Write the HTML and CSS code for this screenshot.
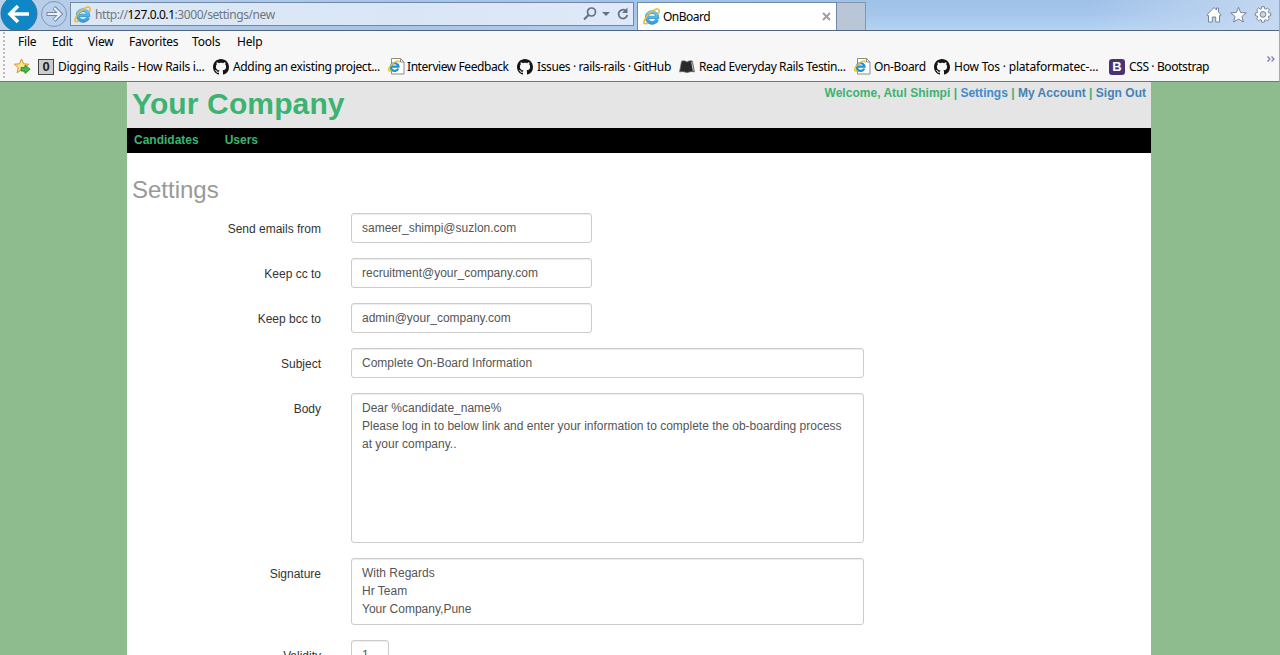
FILE: index.html
```html
<!DOCTYPE html>
<html lang="en">
<head>
<meta charset="utf-8">
<title>OnBoard</title>
<link rel="stylesheet" href="styles.css">
</head>
<body>
<svg class="defs" width="0" height="0">
  <defs>
    <linearGradient id="ieblue" x1="0" y1="0" x2="0" y2="1"><stop offset="0" stop-color="#6fcdf5"/><stop offset="1" stop-color="#3a9fe0"/></linearGradient>
    <symbol id="ie" viewBox="0 0 16 16">
      <path d="M13.300 10.700A5.100 5.100 0 1 1 13.600 8.800H4.600" fill="none" stroke="#3c8fca" stroke-width="3.200"/>
      <path d="M13.100 10.700A5.100 5.100 0 1 1 13.600 8.800H4.600" fill="none" stroke="url(#ieblue)" stroke-width="2.300"/>
      <path d="M14.600 5.400C15.700 2.700 15.300.9 13.400 1 9.500 1.200 2 8.100.9 12.800.4 15.300 2.300 15.300 4.600 14" fill="none" stroke="#f0b92a" stroke-width="1.500"/>
    </symbol>
    <symbol id="iepage" viewBox="0 0 17 17">
      <path d="M3.500.500h9l3.500 3.500v12H3.500z" fill="#fff" stroke="#8b8b8b"/>
      <path d="M12.500.500v3.500H16" fill="none" stroke="#8b8b8b"/>
      <path d="M10.200 10.600A3.900 3.900 0 1 1 10.500 8.700H3.500" fill="none" stroke="#1e8fdc" stroke-width="2.200"/>
      <path d="M11.300 4.500C11 2 8 3 5 5.500 1.500 8.500.300 11.500 1 12.700c.4.7 1.500.3 2.500-.3" fill="none" stroke="#edc21c" stroke-width="1.500"/>
    </symbol>
    <symbol id="github" viewBox="0 0 16 16">
      <path fill="#151515" d="M8 0C3.58 0 0 3.58 0 8c0 3.54 2.29 6.53 5.47 7.59.4.07.55-.17.55-.38 0-.19-.01-.82-.01-1.49-2.010.37-2.530-.49-2.690-.94-.09-.23-.48-.94-.82-1.130-.28-.15-.68-.52-.01-.53.63-.01 1.080.58 1.230.82.72 1.210 1.870.87 2.330.66.07-.52.28-.87.51-1.070-1.780-.2-3.640-.89-3.640-3.950 0-.87.31-1.590.82-2.150-.08-.2-.36-1.020.08-2.120 0 0 .67-.21 2.200.82.64-.18 1.320-.27 2-.27s1.360.09 2 .27c1.530-1.040 2.200-.82 2.200-.82.44 1.100.16 1.920.08 2.120.51.56.82 1.270.82 2.150 0 3.070-1.870 3.750-3.650 3.950.29.25.54.73.54 1.480 0 1.070-.01 1.930-.01 2.200 0 .21.15.46.55.38A8.013 8.013 0 0 0 16 8c0-4.420-3.580-8-8-8z"/>
    </symbol>
  </defs>
</svg>

<div class="chrome">
  <div class="titlebar">
    <svg class="back" width="38" height="30" viewBox="0 0 38 30">
      <circle cx="19" cy="13.500" r="18" fill="#0f86c6" stroke="#3477ab"/>
      <path d="M29 14H11M18 6l-8 8 8 8" fill="none" stroke="#fff" stroke-width="3.600"/>
    </svg>
    <svg class="forward" width="28" height="30" viewBox="0 0 28 30">
      <circle cx="14" cy="14" r="12.500" fill="#b8d0ec" stroke="#8297b5"/>
      <path d="M6.500 14H20M14 7.500l6.500 6.500-6.500 6.500" fill="none" stroke="#7187a6" stroke-width="4"/>
      <path d="M7.500 14H20M14.300 8l6 6-6 6" fill="none" stroke="#e9f2fc" stroke-width="2.200"/>
    </svg>
    <div class="address">
      <svg width="17" height="17"><use href="#ie"/></svg>
      <span class="url">http://<b>127.0.0.1</b>:3000/settings/new</span>
      <svg class="tools" width="48" height="16" viewBox="0 0 48 16" fill="none" stroke="#67727e">
        <circle cx="9.500" cy="6" r="4" stroke-width="1.700"/>
        <path d="M6.500 9L2 13.500" stroke-width="2.200"/>
        <path d="M20 6h8l-4 4z" fill="#67727e" stroke="none"/>
        <path d="M43.500 4.500A4.400 4.400 0 1 0 45.300 9" stroke-width="1.800"/>
        <path d="M45.500 1.500v5.500H40z" fill="#67727e" stroke="none"/>
      </svg>
    </div>
    <div class="tab">
      <svg width="17" height="17"><use href="#ie"/></svg>
      <span class="tab-title">OnBoard</span>
      <svg width="9" height="9" viewBox="0 0 9 9"><path d="M1 1l7 7M8 1L1 8" stroke="#a0a0a0" stroke-width="2"/></svg>
    </div>
    <div class="newtab"></div>
    <svg class="commands" width="68" height="18" viewBox="0 0 68 18" fill="#fff" stroke="#74859b">
      <path d="M.8 9L8 1.500l2.500 2.600V2h2v4.100L15.200 9l-1 1-.7-.5v6.500H9.700v-5H6.300v5H2.500V9.500l-.7.500z"/>
      <path d="M32.500 1.300l2.100 5.200 5.700.4-4.400 3.600 1.500 5.500-4.900-3-4.900 3 1.500-5.500-4.400-3.600 5.700-.4z"/>
      <path fill-rule="evenodd" d="M55.700.7h2.600l.4 2.100 1 .4 1.800-1.200 1.900 1.900-1.200 1.800.4 1 2.100.4v2.600l-2.100.4-.4 1 1.200 1.800-1.900 1.900-1.800-1.200-1 .4-.4 2.100h-2.600l-.4-2.100-1-.4-1.800 1.200-1.900-1.900 1.200-1.800-.4-1-2.100-.4V7.100l2.100-.4.4-1-1.200-1.800L52.500 2l1.800 1.200 1-.4zM57 5.500a2.900 2.900 0 1 0 0 5.800 2.900 2.900 0 0 0 0-5.800z"/>
    </svg>
  </div>
  <div class="bars">
    <div class="grip"></div>
    <div class="rows">
      <nav class="menu">
        <span class="m-file">File</span><span class="m-edit">Edit</span><span class="m-view">View</span><span class="m-fav">Favorites</span><span class="m-tools">Tools</span><span>Help</span>
      </nav>
      <div class="bookmarks">
        <svg class="addfav" width="17" height="17" viewBox="0 0 17 17">
          <path d="M7.500 1l2 4.800 5.200.4-4 3.400 1.300 5.200-4.500-2.800L3 14.800l1.300-5.200-4-3.400 5.200-.4z" fill="#fbe391" stroke="#d59a20"/>
          <path d="M7 9.500h4V7l5.200 4.200-5.200 4.300V13H7z" fill="#47ba43" stroke="#268331" stroke-width=".8"/>
        </svg>
        <div class="bm bm-175 s-dig"><span class="zero">0</span><span>Digging Rails - How Rails i...</span></div>
        <div class="bm bm-175 s-add"><svg width="16" height="16"><use href="#github"/></svg><span>Adding an existing project...</span></div>
        <div class="bm bm-129 s-int"><svg width="17" height="17"><use href="#iepage"/></svg><span>Interview Feedback</span></div>
        <div class="bm bm-162 s-iss"><svg width="16" height="16"><use href="#github"/></svg><span>Issues · rails-rails · GitHub</span></div>
        <div class="bm bm-175 s-iss"><svg width="16" height="16" viewBox="0 0 16 16"><path d="M2.500 2.200C4.500 1.500 6.500 1.800 8 3c1.500-1.200 3.500-1.500 5.500-.8l2 10.800c-2.500-.7-5-.4-7.500.8-2.500-1.200-5-1.500-7.500-.8z" fill="#2b2929" stroke="#777" stroke-width=".7"/><path d="M12.700 3l1.600 9" stroke="#ddd" stroke-width=".9"/></svg><span>Read Everyday Rails Testin...</span></div>
        <div class="bm bm-80 s-onb"><svg width="17" height="17"><use href="#iepage"/></svg><span>On-Board</span></div>
        <div class="bm bm-175"><svg width="16" height="16"><use href="#github"/></svg><span>How Tos · plataformatec-...</span></div>
        <div class="bm s-iss"><span class="bee">B</span><span>CSS · Bootstrap</span></div>
      </div>
    </div>
    <svg class="more" width="8" height="6" viewBox="0 0 8 6"><path d="M.5.5L3 3 .5 5.500M4.500.5L7 3 4.500 5.500" fill="none" stroke="#7676b2" stroke-width="1.200"/></svg>
  </div>
</div>

<div class="page">
  <header class="header">
    <h1>Your Company</h1>
    <div class="user">Welcome, Atul Shimpi | <a class="lit">Settings</a> | <a>My Account</a> | <a>Sign Out</a></div>
  </header>
  <nav class="nav"><span>Candidates</span><span>Users</span></nav>
  <main>
    <h2>Settings</h2>
    <div class="group"><label>Send emails from</label><div class="control medium">sameer_shimpi@suzlon.com</div></div>
    <div class="group"><label>Keep cc to</label><div class="control medium">recruitment@your_company.com</div></div>
    <div class="group"><label>Keep bcc to</label><div class="control medium">admin@your_company.com</div></div>
    <div class="group"><label>Subject</label><div class="control wide">Complete On-Board Information</div></div>
    <div class="group"><label>Body</label><div class="control wide body-text">Dear %candidate_name%<br>Please log in to below link and enter your information to complete the ob-boarding process<br>at your company..</div></div>
    <div class="group"><label>Signature</label><div class="control wide signature">With Regards<br>Hr Team<br>Your Company,Pune</div></div>
    <div class="group"><label>Validity</label><div class="control tiny">1</div></div>
  </main>
</div>
</body>
</html>
```
FILE: styles.css
```css
* { box-sizing: border-box; }
html, body { height: 100%; }
body {
  margin: 0;
  display: flex;
  flex-direction: column;
  overflow: hidden;
  background: #8fbc8f;
  font: 12px/18px "Liberation Sans", Arial, sans-serif;
  color: #333;
}
.defs { position: absolute; }
svg { flex: none; display: block; }

/* browser chrome */
.chrome {
  flex: none;
  height: 82px;
  border-right: 1px solid #8fbc8f;
  border-bottom: 1px solid #747474;
  font-family: "Noto Sans", "Open Sans", sans-serif;
  font-size: 12px;
  color: #000;
}
.titlebar {
  display: flex;
  height: 31px;
  border-bottom: 1px solid #53657c;
  background: linear-gradient(90deg, #b9d0e8 0, #a7c5e8 30%, rgba(167,197,232,0) 60%, rgba(167,197,232,0) 85%, rgba(200,218,242,.9) 100%), linear-gradient(#9fc1e8, #a5c5ec 45%, #b4d4f3);
}
.forward { margin-left: 2px; }
.address {
  display: flex;
  align-items: center;
  width: 564px;
  height: 24px;
  margin: 2px 0 0 2px;
  padding: 0 3px 0 3px;
  border: 1px solid #7188a6;
  background: linear-gradient(90deg, #dce8f5, #d9e6f5 60%, #dfe9f9);
}
.url { flex: 1; margin-left: 4px; padding-top: 2px; color: #717780; letter-spacing: -.43px; white-space: nowrap; }
.url b { font-weight: 400; color: #000; }
.tab {
  display: flex;
  align-items: center;
  width: 200px;
  height: 28px;
  margin: 2px 0 0 3px;
  padding: 0 5px;
  border: 1px solid #7188a6;
  border-bottom: 0;
  background: #fff;
}
.tab-title { flex: 1; margin-left: 3px; letter-spacing: -.5px; }
.newtab {
  width: 29px;
  height: 28px;
  margin-top: 2px;
  border: 1px solid #8296ae;
  border-width: 1px 1px 0 0;
  background: #b9c6d5;
}
.commands { margin: 6px 5px 0 auto; }
.bars { display: flex; height: 50px; background: #f7f7f7; }
.grip { width: 2px; margin: 1px 0 1px 3px; background: repeating-linear-gradient(#bdbdbd 0 2px, transparent 2px 4px); }
.rows { flex: 1; min-width: 0; }
.menu { display: flex; height: 23px; padding-left: 13px; line-height: 21px; letter-spacing: -.2px; }
.m-file { width: 34px; }
.m-edit { width: 36px; }
.m-view { width: 41px; }
.m-fav { width: 63px; }
.m-tools { width: 45px; }
.bookmarks { display: flex; align-items: center; height: 25px; padding-left: 9px; letter-spacing: -.2px; }
.addfav { margin-right: 7px; }
.bm { display: flex; align-items: center; gap: 4px; flex: none; white-space: nowrap; }
.bm-175 { width: 175px; }
.bm-129 { width: 129px; }
.bm-162 { width: 162px; }
.bm-80 { width: 80px; }
.s-dig { letter-spacing: -.26px; }
.s-add { letter-spacing: -.34px; }
.s-int { gap: 2px; letter-spacing: -.43px; }
.s-iss { letter-spacing: -.38px; }
.s-onb { gap: 3px; letter-spacing: -.35px; }
.zero, .bee { width: 16px; height: 16px; font: bold 13px/14px "Liberation Sans", sans-serif; letter-spacing: 0; text-align: center; }
.zero { border: 1px solid #444; background: #ccc; color: #222; }
.bee { border-radius: 3px; background: #4b3273; color: #fff; line-height: 16px; }
.more { margin: 25px 4px 0 0; }

/* application page */
.page { flex: 1; min-height: 0; width: 1024px; margin-left: 127px; background: #fff; overflow: hidden; }
.header { display: flex; justify-content: space-between; height: 46px; padding: 2px 5px 0; border-top-left-radius: 3px; background: #e5e5e5; color: #3cb371; }
h1 { margin: 0; font-size: 30px; line-height: 40px; letter-spacing: .13px; }
.user { font-weight: bold; white-space: nowrap; letter-spacing: .02px; }
.user a { color: #4682b4; }
.user .lit { color: #428bca; }
.nav { display: flex; gap: 26px; height: 25px; padding-left: 7px; background: #000; color: #3cb371; font-weight: bold; line-height: 24px; }
main { padding-left: 5px; }
h2 { margin: 22px 0 8px; font-size: 24px; line-height: 30px; font-weight: 400; color: #999; }
.group { display: flex; margin-bottom: 15px; }
label { width: 189px; margin-right: 30px; padding-top: 7px; text-align: right; }
.control {
  height: 30px;
  padding: 5px 10px;
  border: 1px solid #ccc;
  border-radius: 3px;
  box-shadow: inset 0 1px 1px rgba(0,0,0,.075);
  color: #555;
  white-space: nowrap;
}
.medium { width: 241px; }
.wide { width: 513px; }
.body-text { height: 150px; }
.signature { height: 67px; }
.tiny { width: 38px; }
```
